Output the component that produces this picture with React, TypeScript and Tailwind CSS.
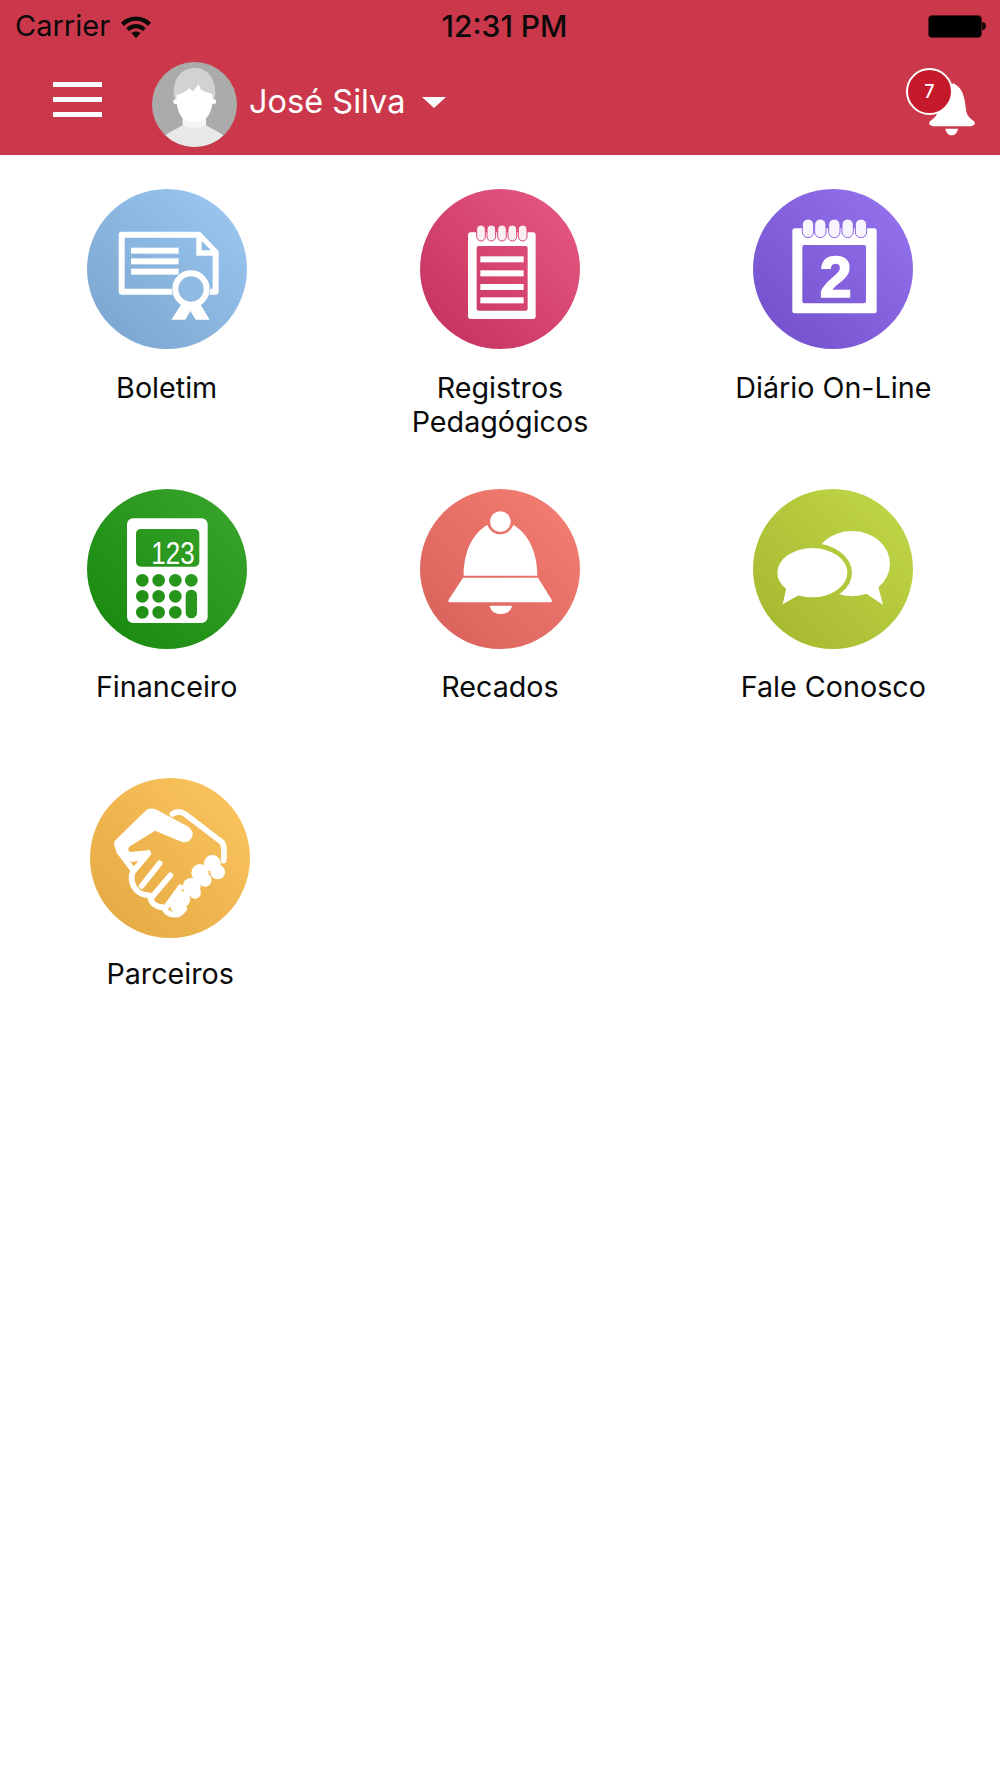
import type { ReactNode } from "react";

const WHITE = "#ffffff";

// rounded rect as a path, so the icons can punch real holes with evenodd
const rr = (x: number, y: number, w: number, h: number, r: number) =>
  `M${x + r} ${y}H${x + w - r}A${r} ${r} 0 0 1 ${x + w} ${y + r}V${y + h - r}A${r} ${r} 0 0 1 ${x + w - r} ${y + h}H${x + r}A${r} ${r} 0 0 1 ${x} ${y + h - r}V${y + r}A${r} ${r} 0 0 1 ${x + r} ${y}Z`;

function Wifi() {
  return (
    <svg width="32" height="25" viewBox="0 0 30 24" className="ml-[10px]">
      <path d="M0.5 8.5C8.5 0.5 21.5 0.5 29.5 8.5L26.6 11.4C19.8 4.8 10.2 4.8 3.4 11.4Z" fill="#0a0a0a" />
      <path d="M5.6 13.6C11 8.4 19 8.4 24.4 13.6L21.5 16.5C17.6 12.8 12.4 12.8 8.5 16.5Z" fill="#0a0a0a" />
      <path d="M10.6 18.5C13 16.1 17 16.1 19.4 18.5L15 23Z" fill="#0a0a0a" />
    </svg>
  );
}

function Battery() {
  return (
    <div className="flex items-center">
      <div className="h-[23px] w-[54px] rounded-[4px] border border-[#5d1620] bg-black" />
      <div className="h-[8px] w-[4px] rounded-r-full bg-[#1a0a0c]" />
    </div>
  );
}

function Avatar() {
  return (
    <svg width="85" height="85" viewBox="7 10 253 253" className="ml-[50px] mt-[4px] shrink-0">
      <defs>
        <clipPath id="avatar-clip">
          <circle cx="133.5" cy="136.5" r="126.5" />
        </clipPath>
      </defs>
      <g clipPath="url(#avatar-clip)">
        <rect x="0" y="0" width="270" height="270" fill="#ababab" />
        <path d="M72 110C68 60 95 28 134 28C172 28 198 60 195 110L190 130H78Z" fill="#d2d2d2" />
        <path d="M40 235C60 215 85 208 100 196H165C180 208 205 215 228 235V270H40Z" fill="#e8e8e8" />
        <path d="M98 170H168V196C150 210 116 210 98 196Z" fill="#f5f5f5" />
        <circle cx="77" cy="128" r="7" fill={WHITE} />
        <circle cx="191" cy="128" r="7" fill={WHITE} />
        <path d="M80 108C95 104 105 100 118 88L128 98L146 76L152 92C165 100 178 102 187 106C190 140 180 175 158 184C142 190 122 190 108 184C88 175 78 140 80 108Z" fill={WHITE} />
      </g>
    </svg>
  );
}

function Notification() {
  return (
    <div className="relative mr-[10px] mt-[6px] h-[90px] w-[90px] shrink-0">
      <svg width="90" height="90" viewBox="0 0 270 270" className="block">
        <path d="M160 70C190 82 195 120 198 150C200 168 212 176 222 184C228 192 222 199 208 199H104C90 199 84 192 90 184C100 176 112 168 114 150C117 120 130 82 160 70Z" fill={WHITE} />
        <path d="M136 206H174C172 218 165 226 155 226C145 226 138 218 136 206Z" fill={WHITE} />
      </svg>
      <div className="absolute left-[6px] top-[8px] flex h-[47px] w-[47px] items-center justify-center rounded-full border-2 border-white bg-[#c51a2b] text-[18px] font-medium text-white">
        7
      </div>
    </div>
  );
}

function Certificate() {
  return (
    <svg width="160" height="160" viewBox="50 42 480 480">
      <path d="M154 179H385L436 232V350H154Z" fill="none" stroke={WHITE} strokeWidth="18" strokeLinejoin="round" />
      <path d="M378 172L444 232V242H378Z" fill={WHITE} />
      <path d="M394 198V226H422Z" fill="#8db9e3" />
      <rect x="182" y="218" width="143" height="18" fill={WHITE} />
      <rect x="182" y="250" width="143" height="18" fill={WHITE} />
      <rect x="182" y="281" width="143" height="18" fill={WHITE} />
      <circle cx="362" cy="342" r="58" fill="#8db9e3" />
      <path d="M335 385L303 434H345L360 408L376 434H418L388 385Z" fill={WHITE} />
      <circle cx="362" cy="342" r="47" fill="#8db9e3" stroke={WHITE} strokeWidth="18" />
    </svg>
  );
}

function Notepad() {
  return (
    <svg width="160" height="160" viewBox="45 42 480 480">
      <path d={rr(189, 172, 203, 260, 8) + rr(215, 213, 153, 194, 6)} fillRule="evenodd" fill={WHITE} />
      {[244, 286, 327, 367].map((top) => (
        <rect key={top} x="226" y={top} width="130" height="18" fill={WHITE} />
      ))}
      {[228, 259, 291, 322, 353].map((x) => (
        <rect key={x} x={x - 13} y="150" width="26" height="48" rx="13" fill="#fbeef2" stroke="#d9446f" strokeWidth="3" />
      ))}
    </svg>
  );
}

function Calendar() {
  return (
    <svg width="160" height="160" viewBox="47 42 480 480">
      <path d={rr(165, 160, 253, 255, 8) + rr(195, 210, 191, 175, 6)} fillRule="evenodd" fill={WHITE} />
      {[212, 249, 291, 331, 371].map((x) => (
        <rect key={x} x={x - 17} y="132" width="34" height="56" rx="17" fill="#f7f4fe" stroke="#8a68e4" strokeWidth="3" />
      ))}
      <text x="295" y="365" textAnchor="middle" fontFamily="'Liberation Sans', sans-serif" fontWeight="700" fontSize="172" stroke={WHITE} strokeWidth="5" fill={WHITE}>
        2
      </text>
    </svg>
  );
}

function Calculator() {
  const dot = (cx: number, cy: number) => `M${cx - 19} ${cy}A19 19 0 1 0 ${cx + 19} ${cy}A19 19 0 1 0 ${cx - 19} ${cy}Z`;
  const dots = [
    [216, 314], [265, 314], [315, 314], [363, 314],
    [216, 362], [265, 362], [315, 362],
    [216, 410], [265, 410], [315, 410],
  ];
  const d = rr(170, 128, 242, 314, 18) + rr(197, 160, 190, 113, 14) + rr(346, 342, 34, 86, 17) + dots.map(([x, y]) => dot(x, y)).join("");
  return (
    <svg width="160" height="160" viewBox="50 40 480 480">
      <path d={d} fillRule="evenodd" fill={WHITE} />
      <text x="243" y="265" textLength="130" lengthAdjust="spacingAndGlyphs" fontFamily="'Liberation Sans', sans-serif" fontSize="96" fill={WHITE}>
        123
      </text>
    </svg>
  );
}

function Bell() {
  return (
    <svg width="160" height="160" viewBox="45 40 480 480">
      <circle cx="286" cy="138" r="31" fill={WHITE} />
      <path d="M176 300C176 225 205 172 247 148C254 166 270 176 286 176C302 176 318 166 325 148C367 172 397 225 397 300Z" fill={WHITE} />
      <path d="M174 306H399L440 372Q443 380 434 380H136Q127 380 131 372Z" fill={WHITE} />
      <path d="M254 390H321C318 406 305 415 287 415C270 415 257 406 254 390Z" fill={WHITE} />
    </svg>
  );
}

function Chat() {
  return (
    <svg width="160" height="160" viewBox="47 42 480 480">
      <defs>
        <mask id="chat-mask">
          <rect x="0" y="0" width="600" height="600" fill={WHITE} />
          <ellipse cx="225" cy="293" rx="119" ry="88" fill="#000000" />
        </mask>
      </defs>
      <g mask="url(#chat-mask)" fill={WHITE}>
        <ellipse cx="344" cy="266" rx="114" ry="98" />
        <path d="M420 325L437 389L380 352Z" />
      </g>
      <ellipse cx="225" cy="293" rx="105" ry="74" fill={WHITE} />
      <path d="M148 335L136 388L185 360Z" fill={WHITE} />
    </svg>
  );
}

function Handshake() {
  return (
    <svg width="160" height="160" viewBox="-45 -66 480 480">
      <path d="M28 138C26 130 28 124 34 118L122 32C130 24 142 24 152 28L246 78C264 90 268 104 258 116C248 130 234 128 222 122L150 92L76 138C68 144 68 152 76 156L136 150L118 180L80 186L44 166C36 156 30 146 28 138Z" fill={WHITE} />
      <g fill="none" stroke={WHITE} strokeWidth="17" strokeLinecap="round" strokeLinejoin="round">
        <path d="M202 42C215 34 228 34 240 42L350 126C358 134 358 150 356 182" />
        <path d="M42 154L86 212C76 226 78 250 92 268C104 282 120 286 134 286C136 306 150 322 176 322C182 338 196 346 216 344C226 342 232 336 238 326" />
        <path d="M130 160L90 208" />
        <path d="M164 190L110 258" />
        <path d="M196 226L140 292" />
        <path d="M226 262L186 318" />
      </g>
      <g fill={WHITE}>
        <circle cx="322" cy="190" r="25" />
        <circle cx="338" cy="216" r="22" />
        <circle cx="285" cy="218" r="26" />
        <circle cx="300" cy="240" r="20" />
        <circle cx="260" cy="260" r="27" />
        <circle cx="270" cy="278" r="18" />
        <circle cx="232" cy="298" r="24" />
        <circle cx="214" cy="320" r="18" />
      </g>
    </svg>
  );
}

interface TileProps {
  label: ReactNode;
  gradient: string;
  icon: ReactNode;
  nudge?: string;
  labelGap?: string;
}

function Tile({ label, gradient, icon, nudge, labelGap }: TileProps) {
  return (
    <div className={`flex flex-col items-center ${nudge ?? ""}`}>
      <div className={`h-[160px] w-[160px] overflow-hidden rounded-full ${gradient}`}>{icon}</div>
      <p className={`${labelGap ?? "mt-[21px]"} text-center text-[28.7px] leading-[34px] text-[#0a0a0a]`}>{label}</p>
    </div>
  );
}

export default function App() {
  return (
    <div className="min-h-[1778px] w-full bg-white font-['Inter',sans-serif]">
      <header className="h-[155px] bg-[#cb384b]">
        <div className="flex h-[50px] items-center pl-[15px] pr-[14px] pt-[2px] text-[29px] text-[#0a0a0a]">
          <div className="flex flex-1 items-center">
            <span>Carrier</span>
            <Wifi />
          </div>
          <span className="ml-[8px] text-[30px] font-medium">12:31 PM</span>
          <div className="flex flex-1 justify-end">
            <Battery />
          </div>
        </div>
        <div className="flex h-[105px] items-center pb-[1px]">
          <div className="ml-[53px] -mt-[6px] flex w-[49px] shrink-0 flex-col gap-[10px]">
            <div className="h-[5px] bg-white" />
            <div className="h-[5px] bg-white" />
            <div className="h-[5px] bg-white" />
          </div>
          <Avatar />
          <span className="ml-[12px] text-[32.5px] text-white">José Silva</span>
          <div className="ml-[17px] h-0 w-0 border-x-[12px] border-t-[11px] border-x-transparent border-t-white" />
          <div className="flex-1" />
          <Notification />
        </div>
      </header>
      <main className="grid grid-cols-3 grid-rows-[300px_290px_auto] pt-[34px]">
        <Tile label="Boletim" labelGap="mt-[22px]" gradient="bg-linear-to-tr from-[#78a3cd] to-[#9dc9f2]" icon={<Certificate />} />
        <Tile label={<>Registros<br />Pedagógicos</>} labelGap="mt-[22px]" gradient="bg-linear-to-tr from-[#c22e5c] to-[#e85a84]" icon={<Notepad />} />
        <Tile label="Diário On-Line" labelGap="mt-[22px]" gradient="bg-linear-to-tr from-[#714dc9] to-[#9875f0]" icon={<Calendar />} />
        <Tile label="Financeiro" gradient="bg-linear-to-tr from-[#14870a] to-[#3aa62c]" icon={<Calculator />} />
        <Tile label="Recados" gradient="bg-linear-to-tr from-[#d75f59] to-[#f58074]" icon={<Bell />} />
        <Tile label="Fale Conosco" gradient="bg-linear-to-tr from-[#a3b62c] to-[#c4d84a]" icon={<Chat />} />
        <Tile label="Parceiros" nudge="pl-[7px] -mt-[1px]" labelGap="mt-[19px]" gradient="bg-linear-to-tr from-[#e2a73f] to-[#fdc661]" icon={<Handshake />} />
      </main>
    </div>
  );
}
